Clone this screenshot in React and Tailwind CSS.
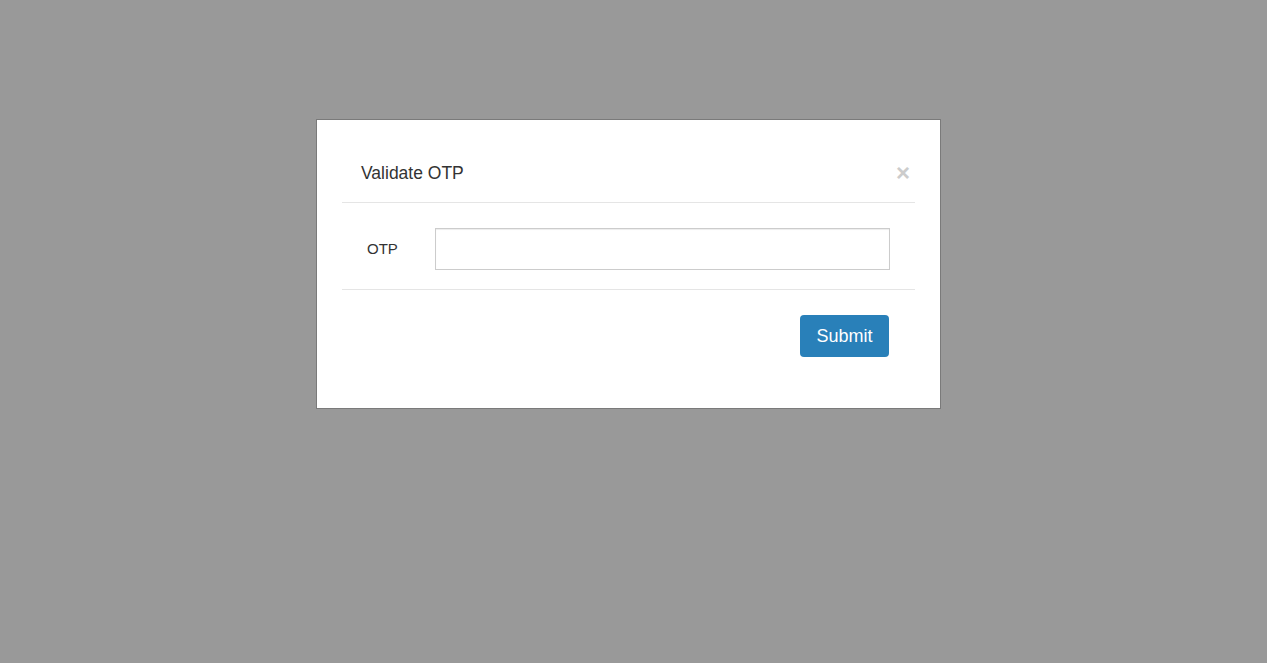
export default function App() {
  return (
    <div className="w-[1267px] h-[663px] bg-[#999999] pt-[119px] font-['Liberation_Sans',Arial,sans-serif]">
      <div className="ml-[316px] w-[625px] h-[290px] bg-white border border-[#7a7a7a] px-[25px] pt-[25px]">
        <div className="flex items-center justify-between border-b border-[#e5e5e5] pl-[19px] pr-[5px] pt-[15px] pb-[16px]">
          <h4 className="text-[17.5px] leading-[26px] text-[#333333]">Validate OTP</h4>
          <span className="text-[24px] leading-[24px] font-bold text-[#cccccc]">×</span>
        </div>
        <div className="flex items-center border-b border-[#e5e5e5] pt-[25px] pb-[19px]">
          <label className="pl-[25px] w-[93px] text-[15px] text-[#333333]">OTP</label>
          <input className="w-[455px] h-[42px] border border-[#cccccc] shadow-[inset_0_1px_1px_rgba(0,0,0,0.075)] outline-none" />
        </div>
        <div className="flex justify-end pt-[25px] pr-[26px]">
          <button className="w-[89px] h-[42px] bg-[#2980b9] rounded-[4px] text-white text-[18px] leading-[40px]">Submit</button>
        </div>
      </div>
    </div>
  );
}
